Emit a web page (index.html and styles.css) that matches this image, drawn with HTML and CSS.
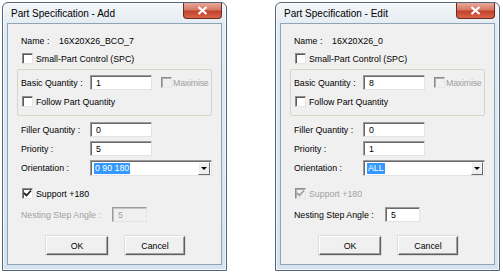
FILE: index.html
```html
<!DOCTYPE html>
<html lang="en">
<head>
    <meta charset="UTF-8">
    <title>Part Specification</title>
    <link rel="stylesheet" href="styles.css">
</head>
<body>
    <!-- Add dialog -->
    <div class="window">
        <div class="titlebar">
            <span class="title">Part Specification - Add</span>
            <div class="close">
                <svg width="11" height="9" viewBox="0 0 11 9"><path d="M1.5 1 L9.5 8 M9.5 1 L1.5 8" stroke="#fff" stroke-width="2.2" fill="none"/></svg>
            </div>
        </div>
        <div class="client">
            <div class="row name-row"><span class="name-lbl">Name :</span><span>16X20X26_BCO_7</span></div>
            <div class="row chk-row"><span class="chk"></span><span>Small-Part Control (SPC)</span></div>
            <div class="group">
                <div class="row field-row">
                    <span class="lbl">Basic Quantity :</span>
                    <div class="edit">1</div>
                    <span class="chk disabled max-chk"></span><span class="disabled-text max-text">Maximise</span>
                </div>
                <div class="row chk-row follow"><span class="chk"></span><span>Follow Part Quantity</span></div>
            </div>
            <div class="row field-row filler"><span class="lbl">Filler Quantity :</span><div class="edit">0</div></div>
            <div class="row field-row"><span class="lbl">Priority :</span><div class="edit">5</div></div>
            <div class="row field-row combo-row">
                <span class="lbl">Orientation :</span>
                <div class="combo"><span class="sel">0 90 180</span><span class="arrow"></span></div>
            </div>
            <div class="row chk-row support"><span class="chk checked"><svg width="9" height="9" viewBox="0 0 9 9"><path d="M1 4 L3.5 6.5 L8 1.5" stroke="#222" stroke-width="1.8" fill="none"/></svg></span><span>Support +180</span></div>
            <div class="row field-row nesting">
                <span class="lbl wide disabled-text">Nesting Step Angle :</span>
                <div class="edit small off">5</div>
            </div>
            <div class="buttons">
                <div class="btn ok">OK</div>
                <div class="btn cancel">Cancel</div>
            </div>
        </div>
    </div>

    <!-- Edit dialog -->
    <div class="window">
        <div class="titlebar">
            <span class="title">Part Specification - Edit</span>
            <div class="close">
                <svg width="11" height="9" viewBox="0 0 11 9"><path d="M1.5 1 L9.5 8 M9.5 1 L1.5 8" stroke="#fff" stroke-width="2.2" fill="none"/></svg>
            </div>
        </div>
        <div class="client">
            <div class="row name-row"><span class="name-lbl">Name :</span><span>16X20X26_0</span></div>
            <div class="row chk-row"><span class="chk"></span><span>Small-Part Control (SPC)</span></div>
            <div class="group">
                <div class="row field-row">
                    <span class="lbl">Basic Quantity :</span>
                    <div class="edit">8</div>
                    <span class="chk disabled max-chk"></span><span class="disabled-text max-text">Maximise</span>
                </div>
                <div class="row chk-row follow"><span class="chk"></span><span>Follow Part Quantity</span></div>
            </div>
            <div class="row field-row filler"><span class="lbl">Filler Quantity :</span><div class="edit">0</div></div>
            <div class="row field-row"><span class="lbl">Priority :</span><div class="edit">1</div></div>
            <div class="row field-row combo-row">
                <span class="lbl">Orientation :</span>
                <div class="combo"><span class="sel">ALL</span><span class="arrow"></span></div>
            </div>
            <div class="row chk-row support"><span class="chk checked disabled"><svg width="9" height="9" viewBox="0 0 9 9"><path d="M1 4 L3.5 6.5 L8 1.5" stroke="#a0a0a0" stroke-width="1.8" fill="none"/></svg></span><span class="disabled-text">Support +180</span></div>
            <div class="row field-row nesting">
                <span class="lbl wide">Nesting Step Angle :</span>
                <div class="edit small">5</div>
            </div>
            <div class="buttons">
                <div class="btn ok">OK</div>
                <div class="btn cancel">Cancel</div>
            </div>
        </div>
    </div>
</body>
</html>
```

FILE: styles.css
```css
body {
    margin: 0;
    padding: 2px 0 0 2px;
    background: #fff;
    display: flex;
    gap: 48px;
    font-family: "Liberation Sans", Arial, sans-serif;
    font-size: 8.8px;
    color: #000;
}

.window {
    width: 225px;
    height: 269px;
    box-sizing: border-box;
    border: 1px solid #52667a;
    border-radius: 6px 6px 0 0;
    background: linear-gradient(to bottom, #f4f7fa 0, #e3ebf2 22px, #d6e2ed 100%);
    box-shadow: inset 0 0 0 1px rgba(255, 255, 255, 0.7);
    display: flex;
    flex-direction: column;
    padding: 0 4px 5px;
}

.titlebar {
    height: 20px;
    display: flex;
    justify-content: space-between;
    align-items: flex-start;
}

.title {
    font-size: 10px;
    margin: 5px 0 0 4px;
}

.close {
    width: 37px;
    height: 15px;
    border: 1px solid #6b2a22;
    border-top: none;
    border-radius: 0 0 4px 4px;
    background: linear-gradient(to bottom, #e8a999 0, #d47863 45%, #c2432e 55%, #d9644a 100%);
    display: flex;
    align-items: center;
    justify-content: center;
}

.client {
    flex: 1;
    background: #f0f0f0;
    border: 1px solid #8fa3b6;
    padding-left: 9px;
}

.row {
    display: flex;
    align-items: center;
    height: 15px;
    padding-left: 4px;
}

.name-row {
    margin-top: 9px;
}

.name-lbl {
    width: 38px;
}

.chk-row {
    margin-top: 3px;
}

.chk {
    width: 11px;
    height: 11px;
    box-sizing: border-box;
    margin: 0 3px 0 1px;
    background: #fff;
    border: 1px solid;
    border-color: #8c8c8c #e6e6e6 #e6e6e6 #8c8c8c;
    box-shadow: inset 1px 1px 0 #5a5a5a;
    display: flex;
    align-items: center;
    justify-content: center;
}

.chk.disabled {
    background: #f0f0f0;
    box-shadow: inset 1px 1px 0 #b0b0b0;
}

.group {
    width: 195px;
    height: 47px;
    box-sizing: border-box;
    margin-top: 3px;
    border: 1px solid #d5d5c8;
    border-radius: 2px;
    padding-top: 5px;
}

.group .row {
    padding-left: 3px;
}

.follow {
    margin-top: 4px;
}

.lbl {
    width: 69px;
}

.lbl.wide {
    width: 91px;
}

.disabled-text {
    color: #a0a0a0;
}

.edit {
    width: 62px;
    height: 15px;
    box-sizing: border-box;
    background: #fff;
    border: 1px solid;
    border-color: #9a9a9a #e3e3e3 #e3e3e3 #9a9a9a;
    box-shadow: inset 1px 1px 0 #6a6a6a;
    padding: 1px 0 0 5px;
    line-height: 12px;
}

.edit.small {
    width: 35px;
}

.edit.off {
    background: #f0f0f0;
    color: #a0a0a0;
    box-shadow: inset 1px 1px 0 #c4c4c4;
}

.max-chk {
    margin-left: 9px;
    margin-right: 1px;
}

.max-text {
    letter-spacing: -0.2px;
}

.filler {
    margin-top: 6px;
}

.field-row + .field-row {
    margin-top: 4px;
}

.combo-row {
    height: 16px;
}

.combo {
    width: 122px;
    height: 16px;
    box-sizing: border-box;
    background: #fff;
    border: 1px solid;
    border-color: #9a9a9a #e3e3e3 #e3e3e3 #9a9a9a;
    box-shadow: inset 1px 1px 0 #6a6a6a;
    display: flex;
    align-items: center;
    justify-content: space-between;
    padding: 0 1px 0 3px;
}

.sel {
    background: #3399ff;
    color: #fff;
    line-height: 11px;
    padding: 0 1px;
}

.arrow {
    width: 12px;
    height: 13px;
    box-sizing: border-box;
    background: #f0f0f0;
    border: 1px solid;
    border-color: #fff #6a6a6a #6a6a6a #fff;
    display: flex;
    align-items: center;
    justify-content: center;
}

.arrow::after {
    content: "";
    border-left: 3px solid transparent;
    border-right: 3px solid transparent;
    border-top: 3px solid #000;
    margin-top: 1px;
}

.support {
    margin-top: 10px;
}

.nesting {
    margin-top: 6px;
}

.buttons {
    display: flex;
    gap: 17px;
    margin: 14px 0 0 29px;
}

.btn {
    height: 19px;
    box-sizing: border-box;
    border: 1px solid;
    border-color: #fff #5f5f5f #5f5f5f #fff;
    box-shadow: inset -1px -1px 0 #a0a0a0, 0 0 0 0.5px #c8c8c8;
    background: #f0f0f0;
    display: flex;
    align-items: center;
    justify-content: center;
}

.ok {
    width: 62px;
}

.cancel {
    width: 60px;
}
```
